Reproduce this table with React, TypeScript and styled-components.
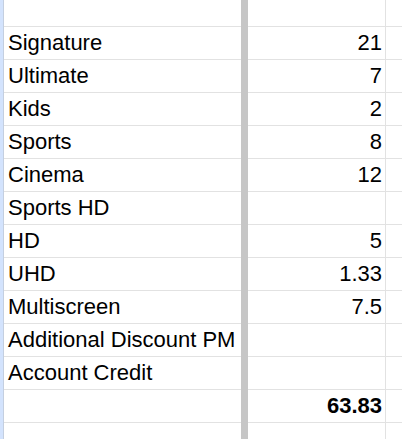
import React from "react";
import styled, { createGlobalStyle } from "styled-components";

const Global = createGlobalStyle`
  html, body {
    margin: 0;
    padding: 0;
    background: #ffffff;
    overflow: hidden;
  }
  body {
    font-family: "Liberation Sans", Arial, sans-serif;
  }
`;

const Sheet = styled.div`
  width: 402px;
  height: 439px;
  display: flex;
  flex-direction: column;
  overflow: hidden;
  background: #ffffff;
`;

const Row = styled.div<{ $h: number }>`
  display: grid;
  grid-template-columns: 3px 1px 237px 7px 137px 1px 1fr;
  height: ${(p) => p.$h}px;
  flex: none;
`;

const Header = styled.div`
  background: #d3e3fd;
`;

const HeaderEdge = styled.div`
  background: #c4cfe0;
`;

const Cell = styled.div<{ $align?: "left" | "right"; $bold?: boolean; $last?: boolean }>`
  box-sizing: border-box;
  border-bottom: ${(p) => (p.$last ? "none" : "1px solid #e2e2e2")};
  font-size: 22px;
  line-height: 32px;
  color: #000000;
  white-space: nowrap;
  overflow: hidden;
  text-align: ${(p) => p.$align ?? "left"};
  font-weight: ${(p) => (p.$bold ? 700 : 400)};
  padding: ${(p) => (p.$align === "right" ? "0 3px 0 0" : "0 0 0 4px")};
`;

const FrozenBar = styled.div`
  background: #c6c6c6;
`;

const GridLine = styled.div`
  background: #e2e2e2;
`;

type Item = { label: string; value: string; bold?: boolean };

const items: Item[] = [
  { label: "Signature", value: "21" },
  { label: "Ultimate", value: "7" },
  { label: "Kids", value: "2" },
  { label: "Sports", value: "8" },
  { label: "Cinema", value: "12" },
  { label: "Sports HD", value: "" },
  { label: "HD", value: "5" },
  { label: "UHD", value: "1.33" },
  { label: "Multiscreen", value: "7.5" },
  { label: "Additional Discount PM", value: "" },
  { label: "Account Credit", value: "" },
  { label: "", value: "63.83", bold: true },
];

function SheetRow({ h, label, value, bold, last }: { h: number; label: string; value: string; bold?: boolean; last?: boolean }) {
  return (
    <Row $h={h}>
      <Header />
      <HeaderEdge />
      <Cell $last={last}>{label}</Cell>
      <FrozenBar />
      <Cell $align="right" $bold={bold} $last={last}>
        {value}
      </Cell>
      <GridLine />
      <Cell $last={last} />
    </Row>
  );
}

export default function App() {
  return (
    <>
      <Global />
      <Sheet>
        <SheetRow h={27} label="" value="" />
        {items.map((it) => (
          <SheetRow key={it.label + it.value} h={33} label={it.label} value={it.value} bold={it.bold} />
        ))}
        <SheetRow h={40} label="" value="" last />
      </Sheet>
    </>
  );
}
